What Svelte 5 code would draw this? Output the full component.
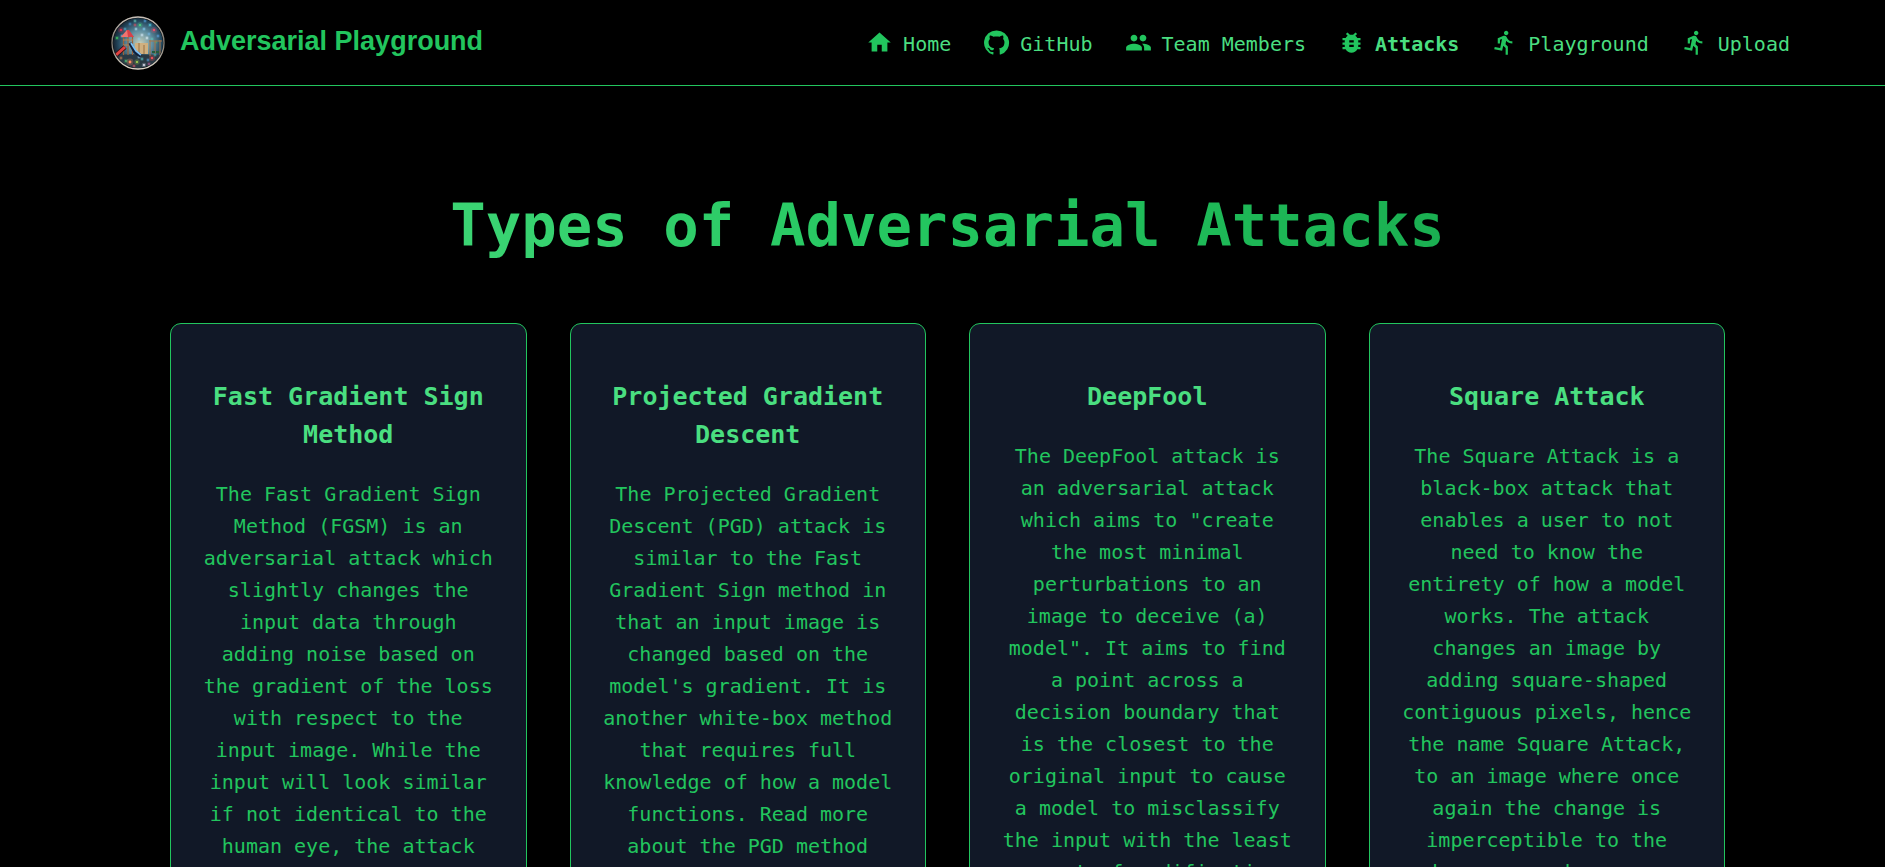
<script>
  const icons = {
    home: 'M10 20v-6h4v6h5v-8h3L12 3 2 12h3v8z',
    github:
      'M12 1.27a11 11 0 00-3.48 21.46c.55.09.73-.28.73-.55v-1.84c-3.03.64-3.67-1.46-3.67-1.46-.55-1.29-1.28-1.65-1.28-1.65-.92-.65.1-.65.1-.65 1.1 0 1.73 1.1 1.73 1.1.92 1.65 2.57 1.2 3.21.92a2 2 0 01.64-1.47c-2.47-.27-5.04-1.19-5.04-5.5 0-1.1.46-2.1 1.2-2.84a3.76 3.76 0 010-2.93s.91-.28 3.11 1.1c1.8-.49 3.7-.49 5.5 0 2.1-1.38 3.02-1.1 3.02-1.1a3.76 3.76 0 01.1 2.93c.83.74 1.2 1.74 1.2 2.94 0 4.21-2.57 5.13-5.04 5.4.45.37.82.92.82 2.02v3.03c0 .27.1.64.73.55A11 11 0 0012 1.27',
    people:
      'M16 11c1.66 0 2.99-1.34 2.99-3S17.66 5 16 5c-1.66 0-3 1.34-3 3s1.34 3 3 3zm-8 0c1.66 0 2.99-1.34 2.99-3S9.66 5 8 5C6.34 5 5 6.34 5 8s1.34 3 3 3zm0 2c-2.33 0-7 1.17-7 3.5V19h14v-2.5c0-2.33-4.67-3.5-7-3.5zm8 0c-.29 0-.62.02-.97.05 1.16.84 1.97 1.97 1.97 3.45V19h6v-2.5c0-2.33-4.67-3.5-7-3.5z',
    bug: 'M20 8h-2.81c-.45-.78-1.07-1.45-1.82-1.96L17 4.41 15.59 3l-2.17 2.17C12.96 5.06 12.49 5 12 5c-.49 0-.96.06-1.41.17L8.41 3 7 4.41l1.62 1.63C7.88 6.55 7.26 7.22 6.81 8H4v2h2.09c-.05.33-.09.66-.09 1v1H4v2h2v1c0 .34.04.67.09 1H4v2h2.81c1.04 1.79 2.97 3 5.19 3s4.15-1.21 5.19-3H20v-2h-2.09c.05-.33.09-.66.09-1v-1h2v-2h-2v-1c0-.34-.04-.67-.09-1H20V8zm-6 8h-4v-2h4v2zm0-4h-4v-2h4v2z',
    run: 'M13.49 5.48c1.1 0 2-.9 2-2s-.9-2-2-2-2 .9-2 2 .9 2 2 2zm-3.6 13.9l1-4.4 2.1 2v6h2v-7.5l-2.1-2 .6-3c1.3 1.5 3.3 2.5 5.5 2.5v-2c-1.9 0-3.5-1-4.3-2.4l-1-1.6c-.4-.6-1-1-1.7-1-.3 0-.5.1-.8.1l-5.2 2.2v4.7h2v-3.4l1.8-.7-1.6 8.1-4.9-1-.4 2 7 1.4z'
  };

  const links = [
    { label: 'Home', icon: 'home' },
    { label: 'GitHub', icon: 'github' },
    { label: 'Team Members', icon: 'people' },
    { label: 'Attacks', icon: 'bug', active: true },
    { label: 'Playground', icon: 'run' },
    { label: 'Upload', icon: 'run' }
  ];

  const attacks = [
    {
      title: 'Fast Gradient Sign Method',
      text: 'The Fast Gradient Sign Method (FGSM) is an adversarial attack which slightly changes the input data through adding noise based on the gradient of the loss with respect to the input image. While the input will look similar if not identical to the human eye, the attack'
    },
    {
      title: 'Projected Gradient Descent',
      text: "The Projected Gradient Descent (PGD) attack is similar to the Fast Gradient Sign method in that an input image is changed based on the model's gradient. It is another white-box method that requires full knowledge of how a model functions. Read more about the PGD method"
    },
    {
      title: 'DeepFool',
      text: 'The DeepFool attack is an adversarial attack which aims to "create the most minimal perturbations to an image to deceive (a) model". It aims to find a point across a decision boundary that is the closest to the original input to cause a model to misclassify the input with the least amount of modification'
    },
    {
      title: 'Square Attack',
      text: 'The Square Attack is a black-box attack that enables a user to not need to know the entirety of how a model works. The attack changes an image by adding square-shaped contiguous pixels, hence the name Square Attack, to an image where once again the change is imperceptible to the human eye, however,'
    }
  ];

  // Glowing lights around the playground: x, y, radius, colour
  const lights = [
    [14, 13, 1, '#58b9d8'], [19, 8, 1, '#4a8fd0'], [24, 5, 1, '#6fd0c0'], [29, 9, 1.4, '#48d884'],
    [34, 5, 1, '#58a9e8'], [39, 9, 1.2, '#4fc5d8'], [43, 14, 1.6, '#e8506a'], [47, 20, 1, '#5fa9ea'],
    [10, 14, 1.6, '#d8304a'], [6, 22, 1.2, '#3fc860'], [11, 20, 1, '#8cc8ea'], [25, 13, 1, '#b8e8f8'],
    [33, 13, 1, '#86d8ff'], [38, 18, 1, '#74b8e8'], [31, 19, 1, '#d8f0ff'], [41, 23, 1, '#5ac8c0'],
    [24, 9, 1, '#e05060'], [36, 22, 1, '#e8f8ff'], [28, 23, 1, '#8bd0f0'], [45, 26, 1, '#4fb070'],
    [10, 42, 1, '#d88850'], [15, 45, 1.2, '#48b870'], [19, 46, 1.8, '#ff8a60'], [26, 46, 1.4, '#a8d850'],
    [23, 50, 1, '#e8586a'], [33, 49, 1.2, '#e8e8f8'], [37, 44, 1, '#58a8e8'], [41, 42, 1.6, '#e85058'],
    [31, 43, 1, '#60d0d0'], [44, 39, 1, '#50c0b0'], [28, 41, 1, '#9cd0f0'], [38, 48, 1, '#c858a0']
  ];
</script>

<div class="page">
  <header>
    <a class="brand" href="#home">
      <svg class="logo" viewBox="0 0 54 54" aria-hidden="true">
        <defs>
          <radialGradient id="sky" cx="54%" cy="50%" r="54%">
            <stop offset="0" stop-color="#c4ccb8" />
            <stop offset="0.4" stop-color="#6593a4" />
            <stop offset="0.75" stop-color="#24485e" />
            <stop offset="1" stop-color="#10141c" />
          </radialGradient>
          <linearGradient id="ring" x1="0" y1="0" x2="0" y2="1">
            <stop offset="0" stop-color="#c8c0b8" />
            <stop offset="0.5" stop-color="#7c7870" />
            <stop offset="1" stop-color="#e0d8cc" />
          </linearGradient>
          <clipPath id="disc"><circle cx="27" cy="27" r="25" /></clipPath>
        </defs>
        <g clip-path="url(#disc)">
          <rect width="54" height="54" fill="url(#sky)" />
          <path d="M0 40Q26 36 54 40V54H0z" fill="#2a3a44" />
          <path d="M24 27h13v11H24z" fill="#d0b080" />
          <path d="M28 27v11M33 29v9" stroke="#9a7040" />
          {#each lights as [x, y, r, colour]}
            <circle cx={x} cy={y} r={r * 1.9} fill={colour} opacity="0.25" />
            <circle cx={x} cy={y} r={r * 0.8} fill={colour} />
          {/each}
          <path d="M12.500 20v19M17 20v19M21.500 20v19" stroke="#9c6238" stroke-width="1.200" />
          <path d="M12 29h10M12 24h10" stroke="#b88050" />
          <path d="M10 21l6-7h2l5 7z" fill="#d84048" />
          <path d="M10 21l6-7 1 7z" fill="#f07470" />
          <path d="M14 31L5 39" stroke="#351418" stroke-width="4.500" />
          <path d="M14 31L5 39" stroke="#df4241" stroke-width="3" />
          <path d="M19 27l5 9 6 4" fill="none" stroke="#10203c" stroke-width="3.500" />
          <path d="M20 27l5 8 5 4" fill="none" stroke="#7cc0f4" stroke-width="1.800" />
          <path d="M38 25h13M39 24v16M49 24v16M44 25v13" fill="none" stroke="#a87448" />
          <path d="M41 36h3M45 36h3" stroke="#235e3b" stroke-width="2" />
        </g>
        <circle cx="27" cy="27" r="26" fill="none" stroke="url(#ring)" stroke-width="1.400" />
      </svg>
      <span>Adversarial Playground</span>
    </a>
    <nav aria-label="Main">
      {#each links as link}
        <a href="#{link.label.toLowerCase().replace(' ', '-')}" class:active={link.active}>
          <svg viewBox="0 0 24 24" aria-hidden="true"><path d={icons[link.icon]} /></svg>
          <span>{link.label}</span>
        </a>
      {/each}
    </nav>
  </header>

  <main>
    <h1>Types of Adversarial Attacks</h1>
    <div class="cards">
      {#each attacks as attack}
        <article>
          <h2>{attack.title}</h2>
          <p>{attack.text}</p>
        </article>
      {/each}
    </div>
  </main>
</div>

<style>
  :global(body) {
    margin: 0;
    background: #000;
  }

  .page {
    min-height: 100vh;
    background: #000;
    color: #22c55e;
    font: 20px/32px 'DejaVu Sans Mono', monospace;
  }

  header {
    display: flex;
    align-items: center;
    justify-content: space-between;
    box-sizing: border-box;
    height: 86px;
    padding: 0 95px 0 111px;
    border-bottom: 1px solid #22c55e;
  }

  a {
    display: flex;
    align-items: center;
    color: #4ade80;
    text-decoration: none;
  }

  .brand {
    gap: 15px;
    color: #22c55e;
    font: bold 27px/32px 'Liberation Sans', Arial, sans-serif;
    white-space: nowrap;
  }

  .brand span {
    padding-bottom: 4px;
  }

  .logo {
    width: 54px;
    height: 54px;
  }

  nav {
    display: flex;
    gap: 32px;
  }

  nav a {
    gap: 10px;
    white-space: nowrap;
  }

  nav span {
    padding-top: 2px;
  }

  nav svg {
    width: 27px;
    height: 27px;
    fill: #22c55e;
  }

  .active {
    font-weight: bold;
  }

  main {
    padding: 107px 160px 43px 170px;
  }

  h1 {
    margin: 0 0 65px;
    background: linear-gradient(to right, #4ade80, #22c55e, #16a34a);
    background-clip: text;
    -webkit-background-clip: text;
    color: transparent;
    font-size: 59px;
    line-height: 65px;
    text-align: center;
  }

  .cards {
    display: grid;
    grid-template-columns: repeat(4, minmax(0, 1fr));
    gap: 43px;
  }

  article {
    padding: 54px 30px;
    border: 1px solid #22c55e;
    border-radius: 11px;
    background: #111827;
    text-align: center;
  }

  h2 {
    margin: 0 0 24px;
    color: #4ade80;
    font-size: 25px;
    line-height: 38px;
  }

  p {
    margin: 0;
  }
</style>
